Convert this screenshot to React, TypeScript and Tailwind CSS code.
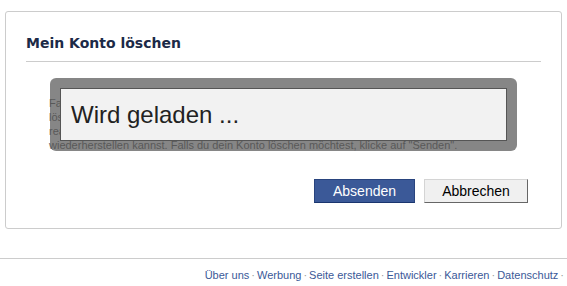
import React from "react";

const footerLinks = ["Über uns", "Werbung", "Seite erstellen", "Entwickler", "Karrieren", "Datenschutz"];

export default function App() {
  return (
    <div className="w-[567px] h-[286px] overflow-hidden bg-white font-['Liberation_Sans',Arial,sans-serif]">
      <div className="relative mx-[5px] mt-[11px] w-[557px] h-[218px] border border-[#cccccc] rounded-[3px] px-[20px]">
        <h2 className="pt-[23px] pb-[9px] leading-[17px] border-b border-[#cccccc] text-[14px] font-bold text-[#1c2a47] font-['DejaVu_Sans',sans-serif]">
          Mein Konto löschen
        </h2>

        <p className="mt-[34px] pl-[23px] text-[11px] leading-[14px] text-[#666666] whitespace-nowrap">
          Falls du denkst, dass du Facebook nicht mehr nutzen wirst und dein Konto dauerhaft
          <br />
          löschen möchtest, können wir uns darum kümmern. Bitte beachte, dass du dein Konto nicht
          <br />
          reaktivieren oder jegliche Inhalte oder Informationen, die du hinzugefügt hast,
          <br />
          wiederherstellen kannst. Falls du dein Konto löschen möchtest, klicke auf "Senden".
        </p>

        <div className="flex justify-end gap-[9px] mt-[27px] mr-[13px]">
          <button className="w-[101px] h-[24px] bg-[#3b5998] border border-[#29447e] border-b-[#1a356e] text-white text-[14px] leading-none">
            Absenden
          </button>
          <button className="w-[104px] h-[24px] bg-[#f0f0f0] border border-[#d4d4d4] border-r-[#666666] border-b-[#666666] text-black text-[14px] leading-none">
            Abbrechen
          </button>
        </div>

        {/* loading overlay */}
        <div className="absolute left-[44px] top-[66px] w-[467px] h-[73px] rounded-[6px] bg-[rgba(82,82,82,0.7)] p-[10px]">
          <div className="h-full bg-[#f2f2f2] border border-[#555555] flex items-center pl-[10px]">
            <span className="text-[24px] text-[#222222] leading-none">Wird geladen ...</span>
          </div>
        </div>
      </div>

      <div className="mt-[29px] border-t border-[#cccccc] pt-[9px] pr-[1px] flex justify-end text-[11px] leading-[14px]">
        {footerLinks.map((l) => (
          <span key={l} className="flex items-center">
            <span className="text-[#3b5998]">{l}</span>
            <span className="text-[#999999] px-[2px]">·</span>
          </span>
        ))}
      </div>
    </div>
  );
}
